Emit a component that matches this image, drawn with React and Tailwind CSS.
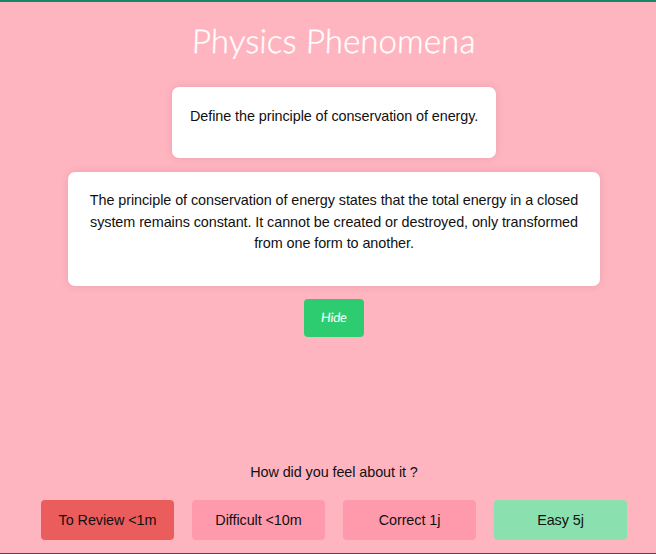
const ratings = [
  { label: 'To Review <1m', tone: 'bg-[#eb5c5c]' },
  { label: 'Difficult <10m', tone: 'bg-[#ff9aac]' },
  { label: 'Correct 1j', tone: 'bg-[#ff9aac]' },
  { label: 'Easy 5j', tone: 'bg-[#8be0af]' },
];

function Card({ className, children }) {
  return (
    <div className={`rounded-[7px] bg-white px-[18px] text-center shadow-[0_0_9px_rgba(0,0,0,0.1)] ${className}`}>
      {children}
    </div>
  );
}

export default function App() {
  return (
    <main className="flex h-[554px] w-[656px] flex-col items-center overflow-hidden border-t-2 border-b border-t-[#168565] border-b-[#50474b] bg-[#ffb5c0] pl-[12px] font-['Liberation_Sans',Arial,sans-serif] text-[14.4px] leading-[21.6px] tracking-[-0.075px] text-[#111]">
      <h1 className="mt-[15px] h-[46px] -skew-x-2 whitespace-nowrap font-[Lato,sans-serif] text-[33px] leading-[46px] font-light tracking-[0.12px] text-white [-webkit-text-stroke:0.35px_white]">
        Physics Phenomena
      </h1>
      <Card className="mt-[24px] h-[71px] w-[324px] whitespace-nowrap pt-[19px]">
        Define the principle of conservation of energy.
      </Card>
      <Card className="mt-[14px] h-[114px] w-[532px] pt-[18px]">
        The principle of conservation of energy states that the total energy in a closed system
        remains constant. It cannot be created or destroyed, only transformed from one form to
        another.
      </Card>
      <button className="mt-[13px] h-[38px] w-[60px] shrink-0 rounded-[4px] bg-[#2ecc71] font-[Lato,sans-serif] text-[13px] font-normal text-white">
        <span className="inline-block -skew-x-6 tracking-[-0.4px]">Hide</span>
      </button>
      <p className="mt-auto">How did you feel about it ?</p>
      <div className="mt-[16.5px] mb-[13.5px] flex gap-[18px]">
        {ratings.map(({ label, tone }) => (
          <button key={label} className={`h-[39.5px] w-[133px] rounded-[4px] pt-[2px] ${tone}`}>
            {label}
          </button>
        ))}
      </div>
    </main>
  );
}
